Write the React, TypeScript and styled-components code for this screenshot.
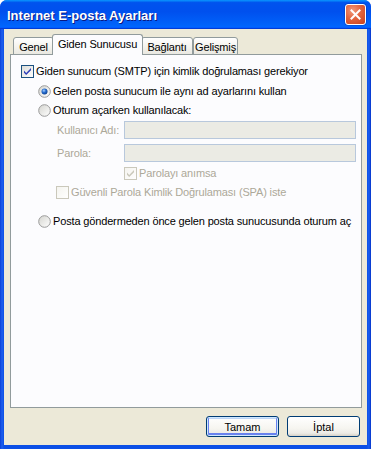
import React from "react";
import styled, { createGlobalStyle } from "styled-components";

const Global = createGlobalStyle`
  html, body { margin: 0; padding: 0; background: #ffffff; overflow: hidden; }
  #root { width: 371px; height: 449px; }
  * { box-sizing: border-box; }
`;

const Window = styled.div`
  width: 371px;
  height: 449px;
  display: flex;
  flex-direction: column;
  border-radius: 7px 7px 0 0;
  background: linear-gradient(to right, #0a3fd8 0px, #1d5fee 2px, #0b4fe6 4px, #0b4fe6 367px, #1a5ff0 369px, #0533c9 371px);
  overflow: hidden;
  font-family: "Liberation Sans", Arial, sans-serif;
  font-size: 11px;
  letter-spacing: -0.15px;
  color: #000;
`;

const TitleBar = styled.div`
  height: 29px;
  flex: none;
  display: flex;
  align-items: center;
  padding: 0 5px 0 7px;
  background: linear-gradient(
    to bottom,
    #0997ff 0%,
    #0053ee 9%,
    #0050ee 40%,
    #0063fa 86%,
    #0066ff 92%,
    #005bff 95%,
    #003dd7 97%,
    #003dd7 100%
  );
`;

const Title = styled.div`
  flex: 1;
  color: #ffffff;
  font-family: "Liberation Sans", Arial, sans-serif;
  font-weight: bold;
  font-size: 13px;
  letter-spacing: 0;
  text-shadow: 1px 1px 0 #0a1883;
  padding-top: 1px;
`;

const CloseButton = styled.div`
  width: 21px;
  height: 21px;
  border: 1px solid #ffffff;
  border-radius: 3px;
  background: radial-gradient(circle at 35% 30%, #f09a7c 0%, #e2643e 45%, #c8401b 100%);
  display: flex;
  align-items: center;
  justify-content: center;
  box-shadow: 0 0 0 0.5px rgba(0, 0, 80, 0.3);
`;

const Client = styled.div`
  flex: 1;
  margin: 0 4px 4px 4px;
  background: #ece9d8;
  display: flex;
  flex-direction: column;
  padding: 6px 5px 0 6px;
`;

const TabRow = styled.div`
  height: 20px;
  margin-bottom: -1px;
  display: flex;
  align-items: flex-end;
  padding-left: 3px;
  position: relative;
  z-index: 1;
`;

const Tab = styled.div<{ $w: number; $active?: boolean }>`
  width: ${(p) => p.$w + (p.$active ? 4 : 0)}px;
  height: ${(p) => (p.$active ? 21 : 18)}px;
  margin: 0 ${(p) => (p.$active ? -2 : 0)}px;
  border: 1px solid #919b9c;
  border-bottom: ${(p) => (p.$active ? "none" : "1px solid #919b9c")};
  border-radius: 3px 3px 0 0;
  background: ${(p) =>
    p.$active
      ? "#fcfcfe"
      : "linear-gradient(to bottom, #ffffff 0%, #f5f4ef 50%, #e9e8e1 100%)"};
  display: flex;
  align-items: center;
  justify-content: center;
  padding-top: ${(p) => (p.$active ? 0 : 1)}px;
  padding-bottom: ${(p) => (p.$active ? 3 : 0)}px;
  position: relative;
  z-index: ${(p) => (p.$active ? 2 : 1)};
  white-space: nowrap;
`;

const Panel = styled.div`
  height: 354px;
  width: 352px;
  flex: none;
  border: 1px solid #919b9c;
  background: #fcfcfe;
  display: flex;
  flex-direction: column;
  padding-top: 10px;
`;

const Row = styled.div<{ $indent: number; $top: number; $h?: number }>`
  display: flex;
  align-items: center;
  margin-left: ${(p) => p.$indent}px;
  margin-top: ${(p) => p.$top}px;
  height: ${(p) => p.$h ?? 13}px;
  white-space: nowrap;
`;

const Label = styled.span<{ $disabled?: boolean }>`
  color: ${(p) => (p.$disabled ? "#aca899" : "#000000")};
  margin-left: 2px;
  line-height: 13px;
`;

const FieldLabel = styled.span`
  width: 67px;
  flex: none;
  color: #aca899;
`;

const Input = styled.div`
  width: 232px;
  height: 18px;
  border: 1px solid #b8c8dc;
  background: #ebebe4;
`;

const Footer = styled.div`
  display: flex;
  justify-content: flex-end;
  gap: 8px;
  margin-top: 8px;
  padding-right: 2px;
`;

const Button = styled.div<{ $default?: boolean }>`
  width: 73px;
  height: 21px;
  border: 1px solid #003c74;
  border-radius: 3px;
  background: linear-gradient(to bottom, #ffffff 0%, #f6f5f0 60%, #ecebe6 85%, #d6d0c5 100%);
  display: flex;
  align-items: center;
  justify-content: center;
  letter-spacing: 0;
  box-shadow: ${(p) =>
    p.$default
      ? "inset 0 0 0 1px #cee7ff, inset 0 -1px 0 2px #6982ee, inset 0 1px 0 1px #bcd4f6"
      : "none"};
`;

const CheckBox = ({ checked, disabled }: { checked?: boolean; disabled?: boolean }) => {
  const id = disabled ? "cbd" : "cbe";
  return (
    <svg width="13" height="13" viewBox="0 0 13 13" style={{ flex: "none" }}>
      <defs>
        <linearGradient id={id} x1="0" y1="0" x2="1" y2="1">
          <stop offset="0" stopColor={disabled ? "#f4f3ee" : "#dcdcd7"} />
          <stop offset="1" stopColor="#ffffff" />
        </linearGradient>
      </defs>
      <rect x="0.5" y="0.5" width="12" height="12" fill={`url(#${id})`} stroke={disabled ? "#cac8bb" : "#1c5180"} />
      {checked && (
        <path
          d="M3 5.6 L5.2 7.9 L10 3.1 L10 5.3 L5.2 10.1 L3 7.8 Z"
          fill={disabled ? "#cac8bb" : "#2f3fb8"}
        />
      )}
    </svg>
  );
};

const Radio = ({ checked }: { checked?: boolean }) => (
  <svg width="13" height="13" viewBox="0 0 13 13" style={{ flex: "none" }}>
    <defs>
      <linearGradient id="rbg" x1="0" y1="0" x2="1" y2="1">
        <stop offset="0" stopColor="#d4d4cf" />
        <stop offset="1" stopColor="#ffffff" />
      </linearGradient>
      <radialGradient id="rdot" cx="0.4" cy="0.35" r="0.7">
        <stop offset="0" stopColor="#a8d0ff" />
        <stop offset="0.45" stopColor="#2a6fd0" />
        <stop offset="1" stopColor="#0a3a8a" />
      </radialGradient>
    </defs>
    <circle cx="6.5" cy="6.5" r="5.8" fill="url(#rbg)" stroke="#9a9a9a" strokeWidth="1" />
    {checked && <circle cx="6.5" cy="6.5" r="3" fill="url(#rdot)" />}
  </svg>
);

export default function App() {
  return (
    <>
      <Global />
      <Window>
        <TitleBar>
          <Title>Internet E-posta Ayarları</Title>
          <CloseButton>
            <svg width="11" height="11" viewBox="0 0 11 11">
              <path d="M1.5 1.5 L9.5 9.5 M9.5 1.5 L1.5 9.5" stroke="#ffffff" strokeWidth="2" strokeLinecap="square" />
            </svg>
          </CloseButton>
        </TitleBar>
        <Client>
          <TabRow>
            <Tab $w={41}>Genel</Tab>
            <Tab $w={87} $active>
              Giden Sunucusu
            </Tab>
            <Tab $w={52}>Bağlantı</Tab>
            <Tab $w={45}>Gelişmiş</Tab>
          </TabRow>
          <Panel>
            <Row $indent={10} $top={0}>
              <CheckBox checked />
              <Label>Giden sunucum (SMTP) için kimlik doğrulaması gerekiyor</Label>
            </Row>
            <Row $indent={27} $top={7}>
              <Radio checked />
              <Label>Gelen posta sunucum ile aynı ad ayarlarını kullan</Label>
            </Row>
            <Row $indent={27} $top={6}>
              <Radio />
              <Label>Oturum açarken kullanılacak:</Label>
            </Row>
            <Row $indent={46} $top={4} $h={18}>
              <FieldLabel>Kullanıcı Adı:</FieldLabel>
              <Input />
            </Row>
            <Row $indent={46} $top={5} $h={18}>
              <FieldLabel>Parola:</FieldLabel>
              <Input />
            </Row>
            <Row $indent={113} $top={5}>
              <CheckBox checked disabled />
              <Label $disabled>Parolayı anımsa</Label>
            </Row>
            <Row $indent={45} $top={6}>
              <CheckBox disabled />
              <Label $disabled>Güvenli Parola Kimlik Doğrulaması (SPA) iste</Label>
            </Row>
            <Row $indent={27} $top={16}>
              <Radio />
              <Label>Posta göndermeden önce gelen posta sunucusunda oturum aç</Label>
            </Row>
          </Panel>
          <Footer>
            <Button $default>Tamam</Button>
            <Button>İptal</Button>
          </Footer>
        </Client>
      </Window>
    </>
  );
}
